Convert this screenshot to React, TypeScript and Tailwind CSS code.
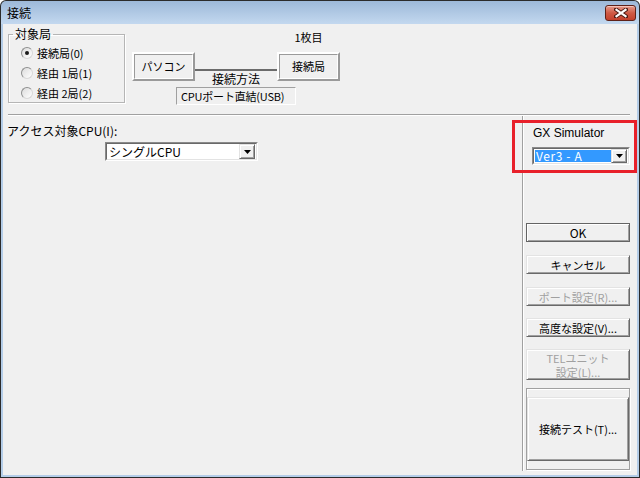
import type { ReactNode } from 'react'

const jp = "font-['Noto_Sans_CJK_JP',sans-serif]"

function Radio({ checked }: { checked?: boolean }) {
  return (
    <span className="flex h-[12px] w-[12px] items-center justify-center rounded-full border border-t-[#8e8f8f] border-l-[#8e8f8f] border-r-[#d8d8d8] border-b-[#d8d8d8] bg-gradient-to-br from-[#dcdcdc] to-white">
      {checked && <span className="h-[4px] w-[4px] rounded-full bg-[#1a1a1a]" />}
    </span>
  )
}

function Arrow() {
  return (
    <div className="flex h-full w-[16px] items-center justify-center border border-t-[#e3e3e3] border-l-[#e3e3e3] border-r-[#696969] border-b-[#696969] bg-[#f0f0f0] shadow-[inset_1px_1px_0_#fff,inset_-1px_-1px_0_#a0a0a0]">
      <svg width="7" height="4" viewBox="0 0 7 4">
        <path d="M0 0h7L3.5 4z" fill="#000" />
      </svg>
    </div>
  )
}

function Btn({
  children,
  disabled,
  def,
  className = '',
}: {
  children: ReactNode
  disabled?: boolean
  def?: boolean
  className?: string
}) {
  const edge = def
    ? 'border-[#646464]'
    : 'border-t-[#e3e3e3] border-l-[#e3e3e3] border-r-[#696969] border-b-[#696969]'
  return (
    <div
      className={`flex w-[104px] flex-col items-center justify-center border bg-[#f0f0f0] text-center text-[11px] leading-[14px] shadow-[inset_1px_1px_0_#fff,inset_-1px_-1px_0_#a0a0a0] ${edge} ${
        disabled ? 'text-[#a0a0a0]' : 'text-black'
      } ${className}`}
    >
      {children}
    </div>
  )
}

function RaisedBox({ children }: { children: ReactNode }) {
  return (
    <div className="flex h-[29px] w-[63px] shrink-0 border-2 border-t-white border-l-white border-r-[#9a9a9a] border-b-[#9a9a9a] bg-[#f0f0f0]">
      <div className="flex flex-1 items-center justify-center border border-[#9a9a9a] border-r-white border-b-white pb-px">
        {children}
      </div>
    </div>
  )
}

function TitleBar() {
  return (
    <div className="flex h-[23px] items-start justify-between rounded-t-[5px] bg-gradient-to-b from-[#9db9d9] to-[#c3d8ef]">
      <span className={`${jp} pl-[6px] pt-[4px] text-[12px] leading-[15px] text-black`}>接続</span>
      <div className="mr-[3px] mt-[4px] flex h-[16px] w-[31px] items-center justify-center rounded-[3px] border border-[#5e2118] bg-gradient-to-b from-[#e59a8b] via-[#cf5a45] to-[#c3402c] shadow-[inset_0_1px_0_#f3c2b8]">
        <svg width="14" height="10" viewBox="0 0 14 10">
          <path d="M2 1.5l10 7M12 1.5l-10 7" stroke="#4a1a12" strokeWidth="4" strokeLinecap="square" />
          <path d="M2.5 1.8l9 6.4M11.5 1.8l-9 6.4" stroke="#fff" strokeWidth="2.2" strokeLinecap="square" />
        </svg>
      </div>
    </div>
  )
}

export default function App() {
  return (
    <div className="h-[478px] w-[640px] rounded-t-[6px] bg-[#2b2b2b] p-px">
      <div className="flex h-full flex-col">
        <TitleBar />
        <div className="flex flex-1 flex-col bg-[#b4cde8] px-[2px] pb-[2px]">
          <div className={`${jp} relative flex flex-1 flex-col bg-[#f0f0f0] text-[11px] leading-[14px] text-black`}>
            {/* top: target station + route diagram */}
            <div className="flex h-[90px] items-start">
              <fieldset className="ml-[5px] mt-[3px] h-[76px] w-[117px] border border-[#b5b5b5] shadow-[inset_1px_1px_0_#fff,1px_1px_0_#fff]">
                <legend className="ml-[4px] px-[2px] text-[12px] leading-[14px]">対象局</legend>
                <div className="flex flex-col pl-[12px] pt-[2px]">
                  {[
                    ['接続局(0)', true],
                    ['経由 1局(1)', false],
                    ['経由 2局(2)', false],
                  ].map(([label, on]) => (
                    <div key={label as string} className="flex h-[20px] items-center gap-[4px]">
                      <Radio checked={on as boolean} />
                      <span>{label}</span>
                    </div>
                  ))}
                </div>
              </fieldset>

              <div className="ml-[7px] mt-[6px] flex w-[208px] flex-col">
                <div className="flex h-[14px] justify-end">
                  <span className="w-[63px] text-center">1枚目</span>
                </div>
                <div className="mt-[8px] flex h-[29px]">
                  <RaisedBox>パソコン</RaisedBox>
                  <div className="flex w-[82px] shrink-0 flex-col">
                    <div className="mt-[17px] h-0 border-t-2 border-[#6b6b6b]" />
                    <span className="mt-[1px] text-center text-[12px] leading-[13px]">接続方法</span>
                  </div>
                  <RaisedBox>接続局</RaisedBox>
                </div>
                <div className="mt-[6px] flex h-[18px] w-[120px] items-center self-center whitespace-nowrap border border-[#a0a0a0] border-r-white border-b-white px-[4px] text-[11px] tracking-[-0.2px]">
                  CPUポート直結(USB)
                </div>
              </div>
            </div>

            <div className="ml-[5px] mr-[7px] h-[2px] border-t border-b border-t-[#a0a0a0] border-b-white" />

            {/* bottom */}
            <div className="flex flex-1">
              <div className="flex w-[519px] flex-col">
                <span className="ml-[4px] mt-[8px] text-[12px]">アクセス対象CPU(I):</span>
                <div className="ml-[102px] mt-[4px] flex h-[19px] w-[153px] border border-t-[#8a8a8a] border-l-[#8a8a8a] border-r-white border-b-white">
                  <div className="flex flex-1 items-center border border-t-[#696969] border-l-[#696969] border-r-[#e3e3e3] border-b-[#e3e3e3] bg-white pr-px">
                    <span className="flex-1 pl-[2px] text-[12px]">シングルCPU</span>
                    <div className="h-[15px]">
                      <Arrow />
                    </div>
                  </div>
                </div>
              </div>

              <div className="mb-[4px] w-[2px] border-l border-r border-l-[#a0a0a0] border-r-white" />

              <div className="flex flex-1 flex-col">
                <span className="ml-[9px] mt-[10px] font-['Liberation_Sans',sans-serif] text-[12px] leading-[14px]">
                  GX Simulator
                </span>
                <div className="ml-[8px] mt-[7px] flex h-[18px] w-[98px] border border-t-[#8a8a8a] border-l-[#8a8a8a] border-r-white border-b-white">
                  <div className="flex flex-1 items-center border border-t-[#696969] border-l-[#696969] border-r-[#e3e3e3] border-b-[#e3e3e3] bg-white p-px">
                    <span className="flex h-full flex-1 items-center whitespace-pre bg-[#3399ff] pl-px text-[12px] leading-[14px] tracking-[0.6px] text-white">
                      Ver3 - A
                    </span>
                    <div className="h-[14px]">
                      <Arrow />
                    </div>
                  </div>
                </div>

                <Btn def className="ml-[2px] mt-[58px] h-[19px] text-[12px]">
                  OK
                </Btn>
                <Btn className="ml-[2px] mt-[13px] h-[19px]">キャンセル</Btn>
                <Btn disabled className="ml-[2px] mt-[13px] h-[19px]">
                  ポート設定(R)...
                </Btn>
                <Btn className="ml-[2px] mt-[12px] h-[19px]">高度な設定(V)...</Btn>
                <Btn disabled className="ml-[2px] mt-[12px] h-[31px]">
                  <span>TELユニット</span>
                  <span>設定(L)...</span>
                </Btn>
                <div className="ml-[2px] mt-[8px] flex h-[82px] w-[104px] justify-center border border-[#a0a0a0] pt-[8px] shadow-[inset_1px_1px_0_#fff,1px_1px_0_#fff]">
                  <Btn className="h-[64px] w-[88px]">接続テスト(T)...</Btn>
                </div>
              </div>
            </div>

            {/* annotation frame */}
            <div className="absolute left-[509px] top-[96px] h-[53px] w-[125px] border-[3px] border-[#e8202a]" />
          </div>
        </div>
      </div>
    </div>
  )
}
